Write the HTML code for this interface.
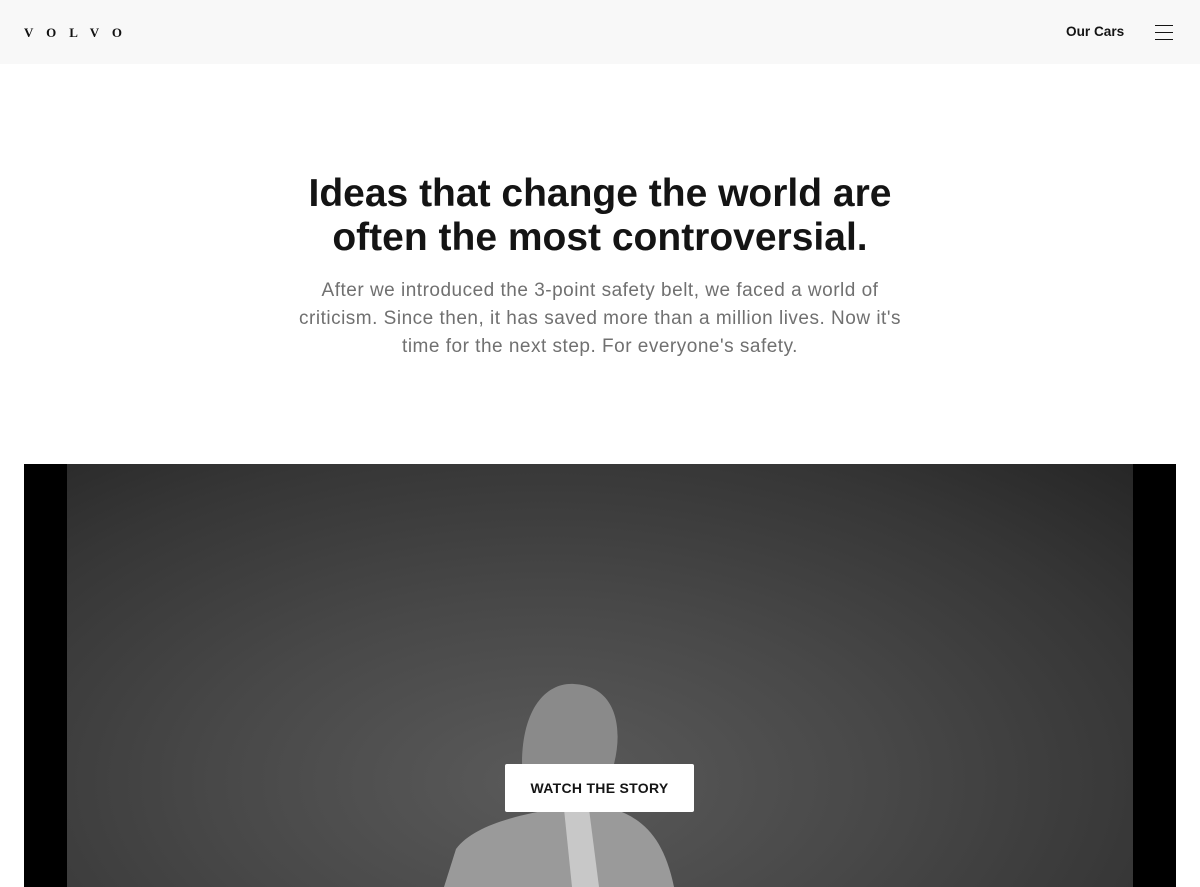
<!DOCTYPE html>
<html><head><meta charset="utf-8"><style>
*{margin:0;padding:0;box-sizing:border-box}
body{width:1200px;height:887px;overflow:hidden;background:#fff;font-family:"Liberation Sans",sans-serif;position:relative}
.hdr{height:64px;background:#f8f8f8;position:relative}
.logo{position:absolute;left:24px;top:25px;font-family:"Liberation Serif",serif;font-weight:bold;font-size:13px;letter-spacing:13px;color:#111}
.cars{position:absolute;left:1066px;top:24px;font-size:13.6px;font-weight:bold;color:#141414}
.ham{position:absolute;left:1155px;top:25px;width:18px}
.ham i{display:block;height:1px;background:#141414;margin-bottom:6px}
h1{position:absolute;top:172px;left:0;width:1200px;text-align:center;font-size:39px;line-height:44px;font-weight:bold;color:#141414}
p{position:absolute;top:277px;left:290px;width:620px;text-align:center;font-size:19px;line-height:28px;color:#707070;letter-spacing:.5px}
.vid{position:absolute;left:24px;top:464px;width:1152px;height:423px;background:#000;overflow:hidden}
.bg{position:absolute;left:43px;top:0;width:1066px;height:423px;background:radial-gradient(ellipse at 45% 75%,#5a5a5a 0%,#484848 40%,#363636 75%,#262626 100%)}
.btn{position:absolute;left:505px;top:764px;width:189px;height:48px;background:#fff;border-radius:2px;text-align:center;line-height:48px;font-size:14px;font-weight:bold;color:#141414;letter-spacing:.3px}
</style></head><body>
<div class="hdr"><div class="logo">VOLVO</div><div class="cars">Our Cars</div><div class="ham"><i></i><i></i><i></i></div></div>
<h1>Ideas that change the world are<br>often the most controversial.</h1>
<p>After we introduced the 3-point safety belt, we faced a world of<br>criticism. Since then, it has saved more than a million lives. Now it's<br>time for the next step. For everyone's safety.</p>
<div class="vid"><div class="bg"></div>
<svg width="1152" height="423" style="position:absolute;left:0;top:0">
<path d="M500 330 C490 250 520 218 550 220 C590 222 600 260 590 300 L585 330 Z" fill="#8a8a8a"/>
<path d="M420 423 L432 385 C450 360 500 350 530 345 L590 345 C620 355 640 375 650 423 Z" fill="#9a9a9a"/>
<path d="M540 345 L565 345 L575 423 L548 423 Z" fill="#c8c8c8"/>
</svg></div>
<div class="btn">WATCH THE STORY</div>
</body></html>
